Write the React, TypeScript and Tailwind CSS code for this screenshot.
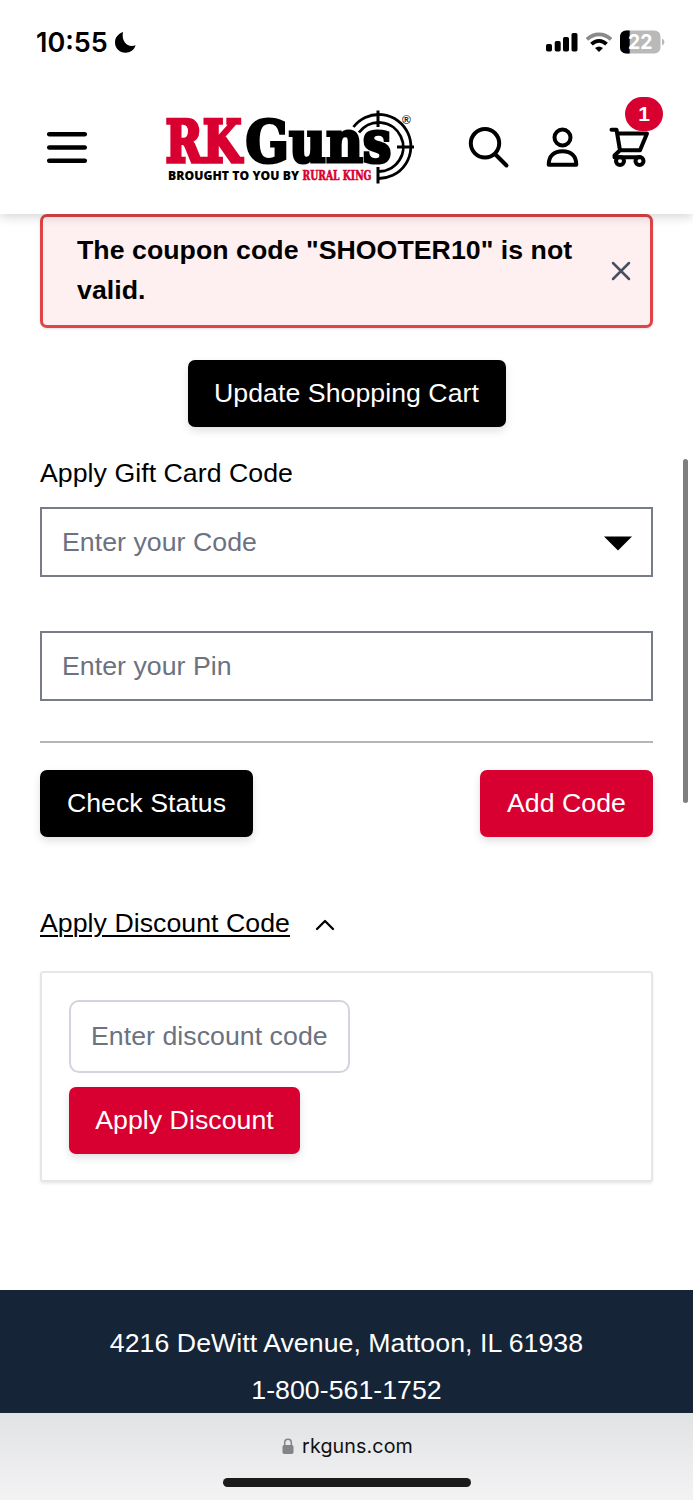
import type { ReactNode } from "react";
import clsx from "clsx";

function StatusBar() {
  return (
    <div className="flex h-[84px] items-center justify-between pl-9 pr-7">
      <div className="flex items-center gap-[6px]">
        <span className="font-[Inter] text-[27px] font-semibold leading-none tracking-[0px]">
          10:55
        </span>
        <svg width="23" height="23" viewBox="0 0 23 23">
          <path d="M9 1C3.8 3 1 6.500 1 11.500C1 17.500 5.500 21.700 11.500 21.700C16.500 21.700 20 19 21.600 14.300C14 17 7 11 9 1Z" />
        </svg>
      </div>
      <div className="flex items-center gap-2">
        <svg width="32" height="20" viewBox="0 0 32 20">
          <rect x="0" y="12" width="6" height="7.500" rx="1.700" />
          <rect x="8.700" y="9" width="6" height="10.500" rx="1.700" />
          <rect x="17" y="5" width="6" height="14.500" rx="1.700" />
          <rect x="25.500" y="1" width="6" height="18.500" rx="1.700" />
        </svg>
        <svg width="26" height="20" viewBox="0 0 26 20" fill="none" strokeWidth="3.800">
          <path d="M1 7.500C8 0.700 18 0.700 25 7.500" stroke="#8a8a8a" />
          <path d="M5.500 12.200C10 7.700 16 7.700 20.500 12.200" stroke="#000" />
          <path d="M9 16Q13 13 17 16L13 20Z" fill="#000" />
        </svg>
        <svg width="45" height="24" viewBox="0 0 45 24">
          <rect x="0" y="0.500" width="40.500" height="23" rx="6" fill="#b9b9b9" />
          <path d="M6 0.500H9.700V23.500H6A6 6 0 0 1 0 17.500V6.500A6 6 0 0 1 6 0.500Z" />
          <path d="M42 8.500Q44.500 9.500 44.500 12T42 15.500Z" fill="#b9b9b9" />
          <text
            x="8"
            y="19"
            textLength="24.500"
            lengthAdjust="spacingAndGlyphs"
            className="fill-white font-[Inter] text-[20px] font-bold"
          >
            22
          </text>
        </svg>
      </div>
    </div>
  );
}

function Logo() {
  return (
    <svg width="280" height="100" viewBox="0 0 280 100">
      <g fill="none" stroke="#000" strokeWidth="2.800">
        <path d="M203.500 32A32 32 0 1 1 228 83.500" />
        <path d="M209 37.500A24.500 24.500 0 1 1 228 76.500" />
        <path d="M228 15.500V32M228 72V88.500M247 52H264" strokeWidth="3" />
      </g>
      <text
        x="15.500"
        y="67"
        textLength="76"
        lengthAdjust="spacingAndGlyphs"
        className="fill-[#d70030] stroke-[#d70030] stroke-[3.500] font-['DejaVu_Serif'] text-[57.500px] font-bold"
      >
        RK
      </text>
      <text
        x="95.500"
        y="67"
        textLength="146"
        lengthAdjust="spacingAndGlyphs"
        className="fill-black stroke-black stroke-[3.200] font-['DejaVu_Serif'] text-[57.500px] font-bold"
      >
        Guns
      </text>
      <text
        x="18"
        y="85"
        textLength="131"
        lengthAdjust="spacingAndGlyphs"
        className="fill-black font-['Open_Sans'] text-[13px] font-extrabold"
      >
        BROUGHT TO YOU BY
      </text>
      <text
        x="152.500"
        y="85"
        textLength="69"
        lengthAdjust="spacingAndGlyphs"
        className="fill-[#d70030] stroke-[#d70030] stroke-[0.600] font-['DejaVu_Serif'] text-[12.500px] font-bold"
      >
        RURAL KING
      </text>
      <text x="252" y="29" className="fill-[#222] font-['Liberation_Sans'] text-[12px] font-bold">
        ®
      </text>
    </svg>
  );
}

function Header() {
  return (
    <header className="relative z-10 h-[214px] bg-white shadow-[0_3px_10px_rgba(0,0,0,0.16)]">
      <StatusBar />
      <div className="flex items-start pl-[47px] pt-[11px]">
        <svg width="40" height="34" viewBox="0 0 40 34" className="mt-9" stroke="#000" strokeWidth="4.500" strokeLinecap="round">
          <path d="M2.200 3.200H37.800M2.200 16.500H37.800M2.200 29.700H37.800" />
        </svg>
        <div className="ml-[63px] w-[280px]">
          <Logo />
        </div>
        <svg width="42" height="42" viewBox="0 0 42 42" className="ml-[38px] mt-8" fill="none" stroke="#000" strokeWidth="4" strokeLinecap="round">
          <circle cx="17" cy="16.300" r="14.200" />
          <path d="M27.500 27.500L38.500 38.500" />
        </svg>
        <svg width="34" height="42" viewBox="0 0 34 42" className="ml-[35px] mt-8" fill="none" stroke="#000" strokeWidth="4" strokeLinejoin="round">
          <circle cx="17.500" cy="10.500" r="8" />
          <path d="M3.700 37.800H31.300C31.300 29 26 24.200 17.500 24.200S3.700 29 3.700 37.800Z" />
        </svg>
        <div className="relative ml-[30px] mt-8">
          <svg width="42" height="42" viewBox="0 0 42 42" fill="none" stroke="#000" strokeWidth="4" strokeLinecap="round" strokeLinejoin="round">
            <path d="M2.500 2.700H7.500L11 23.300H31L38 6.500H8.500M11 23.300L5.500 28.500V30.300H31" />
            <circle cx="11" cy="34" r="4" />
            <circle cx="30.500" cy="34" r="4" />
          </svg>
          <span className="absolute -top-[30px] left-4 flex h-[34px] w-[38px] items-center justify-center rounded-full bg-[#d70030] pb-[2px] font-['Liberation_Sans'] text-[21px] font-bold leading-none text-white">
            1
          </span>
        </div>
      </div>
    </header>
  );
}

function Button({ children, dark, className }: { children: ReactNode; dark?: boolean; className?: string }) {
  return (
    <button
      className={clsx(
        "h-[67px] whitespace-nowrap rounded-[7px] pb-[2px] text-center text-white shadow-[0_4px_8px_rgba(0,0,0,0.12)]",
        dark ? "bg-black" : "bg-[#d70030]",
        className
      )}
    >
      {children}
    </button>
  );
}

export default function App() {
  return (
    <div className="relative flex h-[1500px] w-[693px] flex-col overflow-hidden bg-white font-['Liberation_Sans',sans-serif] text-[26.700px] leading-10 tracking-[0.040px] text-black">
      <Header />

      <main className="flex h-[1076px] flex-col px-10">
        <div className="flex h-[114px] items-center justify-between rounded-[7px] border-[3.500px] border-[#e04446] bg-[#fef0f0] pl-[34px] pr-[18px] shadow-sm">
          <p className="w-[510px] pb-[2px] font-bold">The coupon code "SHOOTER10" is not valid.</p>
          <svg width="22" height="22" viewBox="0 0 22 22" stroke="#475060" strokeWidth="2.500" strokeLinecap="round">
            <path d="M3 3L19 19M19 3L3 19" />
          </svg>
        </div>

        <Button dark className="mt-8 w-[318px] self-center">
          Update Shopping Cart
        </Button>

        <label className="mt-[26px] block">Apply Gift Card Code</label>
        <div className="mt-[14px] flex h-[70px] items-center justify-between border-2 border-[#777c88] pl-5 pr-[19px] text-[#6b7280]">
          Enter your Code
          <svg width="28" height="15" viewBox="0 0 28 15" className="mt-[2px]">
            <path d="M0 0.500H28L14 14.500Z" fill="#000" />
          </svg>
        </div>
        <div className="mt-[54px] flex h-[70px] items-center border-2 border-[#777c88] pl-5 text-[#6b7280]">
          Enter your Pin
        </div>

        <hr className="mt-10 border-t-2 border-[#b5b5b5]" />

        <div className="mt-[27px] flex justify-between">
          <Button dark className="w-[213px]">
            Check Status
          </Button>
          <Button className="w-[173px]">Add Code</Button>
        </div>

        <div className="mt-[66px] flex h-10 items-center">
          <span className="underline decoration-2 underline-offset-[3px]">Apply Discount Code</span>
          <svg width="20" height="12" viewBox="0 0 20 12" className="ml-[25px] mt-1" fill="none" stroke="#000" strokeWidth="2.300" strokeLinecap="round" strokeLinejoin="round">
            <path d="M2 10L10 2L18 10" />
          </svg>
        </div>

        <div className="mt-7 flex h-[211px] flex-col items-start rounded-[3px] border-2 border-[#e6e6e6] pl-[27px] pt-[27px] shadow-[0_2px_3px_rgba(0,0,0,0.08)]">
          <div className="flex h-[73px] w-[281px] items-center whitespace-nowrap rounded-[10px] border-2 border-[#d2d5db] pb-[2px] pl-5 text-[#6b7280]">
            Enter discount code
          </div>
          <Button className="mt-[14px] w-[231px] pb-1">Apply Discount</Button>
        </div>
      </main>

      <footer className="flex h-[123px] flex-col items-center bg-[#162438] pt-[30px] leading-[47px] text-white">
        <p>4216 DeWitt Avenue, Mattoon, IL 61938</p>
        <p>1-800-561-1752</p>
      </footer>

      <div className="flex h-[87px] flex-col items-center bg-linear-to-b from-[#e1e2e4] to-[#f3f3f4] pt-[21px]">
        <div className="ml-[2px] flex h-6 items-center gap-2">
          <svg width="12" height="17" viewBox="0 0 12 17">
            <rect x="0.500" y="7" width="11" height="9" rx="1.800" fill="#838485" />
            <path d="M2.700 8V4.500A3.300 3.300 0 0 1 9.300 4.500V8" fill="none" stroke="#838485" strokeWidth="1.500" />
          </svg>
          <span className="font-[Inter] text-[19.700px] leading-6 tracking-[0.100px] text-[#111]">rkguns.com</span>
        </div>
        <div className="mt-5 h-[9px] w-[248px] rounded-full bg-[#1b1b1b]" />
      </div>

      <div className="absolute left-[683px] top-[459px] h-[344px] w-[5px] rounded-full bg-[#7f7f7f]" />
    </div>
  );
}
